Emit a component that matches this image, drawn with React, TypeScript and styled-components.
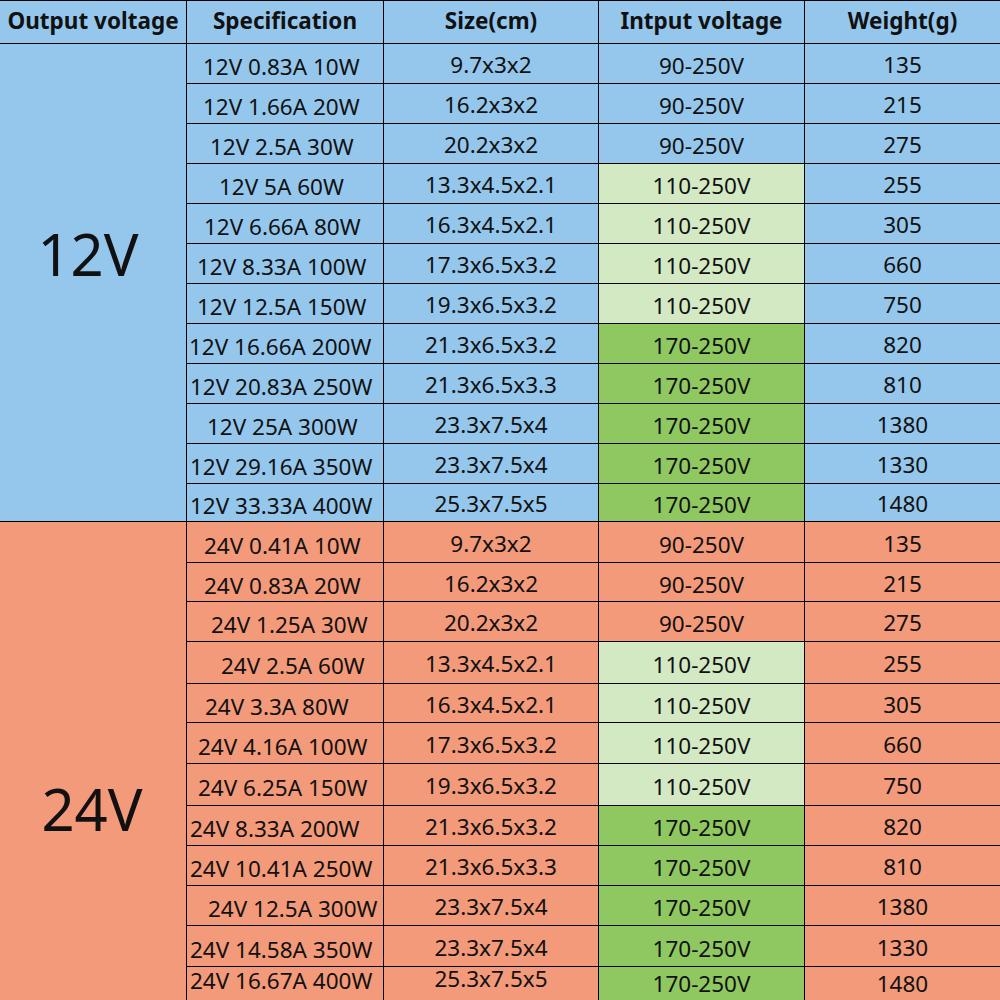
import React from "react";
import styled, { createGlobalStyle } from "styled-components";

const Global = createGlobalStyle`
  html, body { margin: 0; padding: 0; background: #ffffff; }
  #root { width: 1000px; height: 1000px; overflow: hidden; }
`;

const FONT = `"Noto Sans", "Open Sans", "Liberation Sans", sans-serif`;

const BLUE = "#95c7ed";
const SALMON = "#f39a7a";
const LIGHT_GREEN = "#d3e9c3";
const GREEN = "#8fc761";

type Row = [string, string, string, string, number];

interface Section {
  label: string;
  color: string;
  shift: number;
  dx: number;
  heights: number[];
  rows: Row[];
}

const sections: Section[] = [
  {
    label: "12V",
    color: BLUE,
    shift: -29,
    dx: -5,
    heights: [40, 40, 40, 40, 40, 40, 40, 40, 40, 40, 40, 38],
    rows: [
      ["12V 0.83A 10W", "9.7x3x2", "90-250V", "135", 203],
      ["12V 1.66A 20W", "16.2x3x2", "90-250V", "215", 203],
      ["12V 2.5A 30W", "20.2x3x2", "90-250V", "275", 210],
      ["12V 5A 60W", "13.3x4.5x2.1", "110-250V", "255", 219],
      ["12V 6.66A 80W", "16.3x4.5x2.1", "110-250V", "305", 204],
      ["12V 8.33A 100W", "17.3x6.5x3.2", "110-250V", "660", 197],
      ["12V 12.5A 150W", "19.3x6.5x3.2", "110-250V", "750", 197],
      ["12V 16.66A 200W", "21.3x6.5x3.2", "170-250V", "820", 189],
      ["12V 20.83A 250W", "21.3x6.5x3.3", "170-250V", "810", 190],
      ["12V 25A 300W", "23.3x7.5x4", "170-250V", "1380", 207],
      ["12V 29.16A 350W", "23.3x7.5x4", "170-250V", "1330", 190],
      ["12V 33.33A 400W", "25.3x7.5x5", "170-250V", "1480", 190],
    ],
  },
  {
    label: "24V",
    color: SALMON,
    shift: 47,
    dx: -1,
    heights: [41, 39, 40, 42, 39, 41, 42, 40, 40, 40, 41, 34],
    rows: [
      ["24V 0.41A 10W", "9.7x3x2", "90-250V", "135", 204],
      ["24V 0.83A 20W", "16.2x3x2", "90-250V", "215", 204],
      ["24V 1.25A 30W", "20.2x3x2", "90-250V", "275", 211],
      ["24V 2.5A 60W", "13.3x4.5x2.1", "110-250V", "255", 221],
      ["24V 3.3A 80W", "16.3x4.5x2.1", "110-250V", "305", 205],
      ["24V 4.16A 100W", "17.3x6.5x3.2", "110-250V", "660", 198],
      ["24V 6.25A 150W", "19.3x6.5x3.2", "110-250V", "750", 198],
      ["24V 8.33A 200W", "21.3x6.5x3.2", "170-250V", "820", 190],
      ["24V 10.41A 250W", "21.3x6.5x3.3", "170-250V", "810", 190],
      ["24V 12.5A 300W", "23.3x7.5x4", "170-250V", "1380", 208],
      ["24V 14.58A 350W", "23.3x7.5x4", "170-250V", "1330", 190],
      ["24V 16.67A 400W", "25.3x7.5x5", "170-250V", "1480", 190],
    ],
  },
];

const HEADER_HEIGHT = 44;
const rowTemplate = [HEADER_HEIGHT, ...sections.flatMap((s) => s.heights)]
  .map((h) => `${h}px`)
  .join(" ");

const Table = styled.div<{ $rows: string }>`
  display: grid;
  grid-template-columns: 187px 197px 215px 206px 195px;
  grid-template-rows: ${(p) => p.$rows};
  width: 1000px;
  font-family: ${FONT};
  color: #111111;
  background: ${BLUE};
`;

const HeadCell = styled.div<{ $last?: boolean }>`
  box-sizing: border-box;
  display: flex;
  align-items: center;
  justify-content: center;
  border-top: 1px solid #000;
  border-bottom: 1px solid #000;
  border-right: ${(p) => (p.$last ? "none" : "1px solid #000")};
  background: ${BLUE};
  font-size: 22.5px;
  font-weight: 700;
  white-space: nowrap;
  padding-bottom: 3px;
`;

const LabelCell = styled.div<{ $bg: string; $shift: number; $dx: number }>`
  box-sizing: border-box;
  grid-column: 1;
  grid-row: span 12;
  display: flex;
  align-items: center;
  justify-content: center;
  background: ${(p) => p.$bg};
  border-right: 1px solid #000;
  border-bottom: 1px solid #000;
  font-size: 58px;
  font-weight: 400;
  padding-top: ${(p) => (p.$shift > 0 ? p.$shift * 2 : 0)}px;
  padding-bottom: ${(p) => (p.$shift < 0 ? -p.$shift * 2 : 0)}px;
  padding-right: ${(p) => (p.$dx < 0 ? -p.$dx * 2 : 0)}px;
`;

const Cell = styled.div<{ $bg: string; $last?: boolean; $dy: number }>`
  box-sizing: border-box;
  display: flex;
  align-items: center;
  justify-content: center;
  background: ${(p) => p.$bg};
  border-right: ${(p) => (p.$last ? "none" : "1px solid #000")};
  border-bottom: 1px solid #000;
  font-size: 22.5px;
  white-space: nowrap;
  padding-top: ${(p) => (p.$dy > 0 ? p.$dy * 2 : 0)}px;
  padding-bottom: ${(p) => (p.$dy < 0 ? -p.$dy * 2 : 0)}px;
`;

const SpecCell = styled(Cell)<{ $indent: number }>`
  justify-content: flex-start;
  padding-left: ${(p) => p.$indent}px;
`;

const inputTone = (input: string, base: string) =>
  input.startsWith("110") ? LIGHT_GREEN : input.startsWith("170") ? GREEN : base;

const headers = [
  "Output voltage",
  "Specification",
  "Size(cm)",
  "Intput voltage",
  "Weight(g)",
];

export default function App() {
  return (
    <>
      <Global />
      <Table $rows={rowTemplate}>
        {headers.map((h, i) => (
          <HeadCell key={h} $last={i === headers.length - 1}>
            {h}
          </HeadCell>
        ))}
        {sections.map((s, si) => (
          <React.Fragment key={s.label}>
            <LabelCell $bg={s.color} $shift={s.shift} $dx={s.dx}>
              {s.label}
            </LabelCell>
            {s.rows.map(([spec, size, input, weight, x], i) => {
              const tail = si === sections.length - 1 && i === s.rows.length - 1;
              return (
                <React.Fragment key={spec + i}>
                  <SpecCell $bg={s.color} $dy={tail ? -3 : 3} $indent={x - 187}>
                    {spec}
                  </SpecCell>
                  <Cell $bg={s.color} $dy={tail ? -5 : 1}>
                    {size}
                  </Cell>
                  <Cell $bg={inputTone(input, s.color)} $dy={tail ? 0 : 2}>
                    {input}
                  </Cell>
                  <Cell $bg={s.color} $dy={tail ? 0 : 1} $last>
                    {weight}
                  </Cell>
                </React.Fragment>
              );
            })}
          </React.Fragment>
        ))}
      </Table>
    </>
  );
}
